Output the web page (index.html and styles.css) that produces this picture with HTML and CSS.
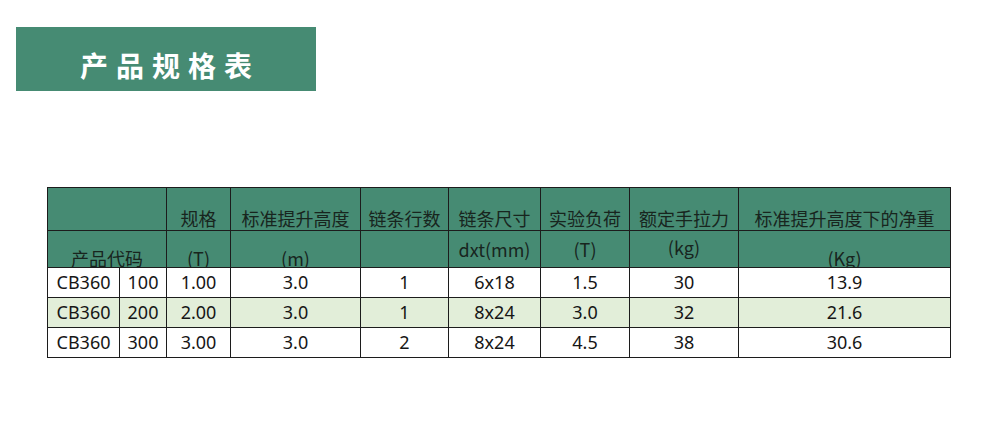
FILE: index.html
```html
<!DOCTYPE html>
<html lang="zh">
<head>
<meta charset="utf-8">
<title>产品规格表</title>
<link rel="stylesheet" href="styles.css">
</head>
<body>
<div class="banner">产品规格表</div>
<table class="spec">
  <colgroup>
    <col class="c1"><col class="c2"><col class="c3"><col class="c4"><col class="c5"><col class="c6"><col class="c7"><col class="c8"><col class="c9">
  </colgroup>
  <tr class="h1">
    <td colspan="2"><div class="cell"></div></td>
    <td><div class="cell">规格</div></td>
    <td><div class="cell">标准提升高度</div></td>
    <td><div class="cell">链条行数</div></td>
    <td><div class="cell">链条尺寸</div></td>
    <td><div class="cell">实验负荷</div></td>
    <td><div class="cell">额定手拉力</div></td>
    <td><div class="cell">标准提升高度下的净重</div></td>
  </tr>
  <tr class="h2">
    <td colspan="2"><div class="cell low">产品代码</div></td>
    <td><div class="cell low">(T)</div></td>
    <td><div class="cell low">(m)</div></td>
    <td><div class="cell"></div></td>
    <td><div class="cell mid">dxt(mm)</div></td>
    <td><div class="cell mid">(T)</div></td>
    <td><div class="cell mid2">(kg)</div></td>
    <td><div class="cell low">(Kg)</div></td>
  </tr>
  <tr class="row">
    <td>CB360</td><td>100</td><td>1.00</td><td>3.0</td><td>1</td><td>6x18</td><td>1.5</td><td>30</td><td>13.9</td>
  </tr>
  <tr class="row alt">
    <td>CB360</td><td>200</td><td>2.00</td><td>3.0</td><td>1</td><td>8x24</td><td>3.0</td><td>32</td><td>21.6</td>
  </tr>
  <tr class="row">
    <td>CB360</td><td>300</td><td>3.00</td><td>3.0</td><td>2</td><td>8x24</td><td>4.5</td><td>38</td><td>30.6</td>
  </tr>
</table>
</body>
</html>
```

FILE: styles.css
```css
html, body {
  margin: 0;
  padding: 0;
  background: #ffffff;
}
body {
  font-family: "Noto Sans", "Noto Sans CJK SC", sans-serif;
  color: #161616;
}
.banner {
  box-sizing: border-box;
  margin: 27px 0 0 16px;
  width: 300px;
  height: 64px;
  padding-top: 20px;
  padding-left: 8px;
  background: #468b73;
  color: #ffffff;
  font-family: "Noto Sans CJK SC", sans-serif;
  font-weight: 700;
  font-size: 28px;
  line-height: 36px;
  letter-spacing: 8px;
  text-align: center;
}
.spec {
  margin: 96px 0 0 47px;
  border-collapse: collapse;
  table-layout: fixed;
  width: 904px;
  font-size: 18px;
}
.c1 { width: 72px; }
.c2 { width: 47px; }
.c3 { width: 64px; }
.c4 { width: 130px; }
.c5 { width: 88px; }
.c6 { width: 92px; }
.c7 { width: 89px; }
.c8 { width: 109px; }
.c9 { width: 212px; }
.spec td {
  border: 1.5px solid #1c1c1c;
  padding: 0;
  text-align: center;
  white-space: nowrap;
}
.h1 td, .h2 td {
  background: #468b73;
  color: #18251e;
  font-family: "Noto Sans CJK SC", sans-serif;
  font-size: 18px;
}
.cell {
  box-sizing: border-box;
}
.h1 .cell {
  height: 42px;
  padding-top: 19px;
  line-height: 22px;
}
.h2 .cell {
  height: 36px;
  line-height: 22px;
  overflow: hidden;
}
.h2 .low { padding-top: 16px; }
.h2 .mid { padding-top: 7px; }
.h2 .mid2 { padding-top: 5px; }
.row td {
  height: 29px;
  line-height: 29px;
  background: #ffffff;
}
.row.alt td {
  background: #e2eed9;
}
```
